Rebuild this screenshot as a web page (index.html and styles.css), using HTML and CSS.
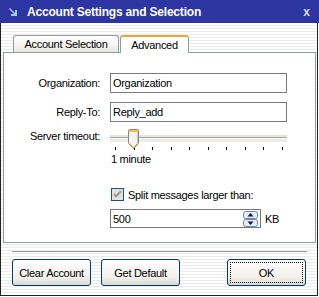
FILE: index.html
```html
<!DOCTYPE html>
<html lang="en">

<head>
    <meta charset="UTF-8">
    <title>Account Settings and Selection</title>
    <link rel="stylesheet" href="styles.css">
</head>

<body>
    <div class="window">
        <div class="titlebar">
            <svg class="app-icon" width="8" height="8" viewBox="0 0 8 8">
                <polygon points="0,1 1,0 6,5 6,2 8,2 8,8 2,8 2,6 5,6" fill="#a9c8f4" />
            </svg>
            <span class="title">Account Settings and Selection</span>
            <span class="close">x</span>
        </div>

        <div class="client">
            <div class="tabs">
                <div class="tab">Account Selection</div>
                <div class="tab active">Advanced</div>
            </div>

            <div class="panel">
                <div class="row">
                    <label>Organization:</label>
                    <div class="textbox">Organization</div>
                </div>
                <div class="row second">
                    <label>Reply-To:</label>
                    <div class="textbox">Reply_add</div>
                </div>

                <div class="row slider-row">
                    <label>Server timeout:</label>
                    <div class="slider">
                        <div class="track"></div>
                        <svg class="thumb" width="11" height="21" viewBox="0 0 11 21">
                            <path d="M1.5 0.5 h8 a1 1 0 0 1 1 1 v13 l-5 5 l-5 -5 v-13 a1 1 0 0 1 1 -1z" fill="#f4f3ee" stroke="#8c8b80" />
                            <rect x="1" y="1" width="9" height="2" fill="#f6c04f" />
                            <path d="M1.5 14.5 l4 4 l4 -4" fill="none" stroke="#f0b030" />
                            <path d="M9.5 3 v11" stroke="#c8c6b8" />
                        </svg>
                        <div class="ticks">
                            <i></i><i></i><i></i><i></i><i></i><i></i><i></i><i></i><i></i><i></i>
                        </div>
                        <div class="slider-value">1 minute</div>
                    </div>
                </div>

                <div class="row check-row">
                    <label></label>
                    <div class="checkbox">
                        <svg width="13" height="13" viewBox="0 0 13 13">
                            <rect x="0.5" y="0.5" width="12" height="12" fill="#e2e1da" stroke="#1c5180" />
                            <path d="M3 6 l2 2.2 l5 -5" fill="none" stroke="#9a9a94" stroke-width="2" />
                        </svg>
                        <span>Split messages larger than:</span>
                    </div>
                </div>

                <div class="row number-row">
                    <label></label>
                    <div class="numbox">
                        <span>500</span>
                        <svg class="spinner" width="15" height="16" viewBox="0 0 15 16">
                            <rect x="0.5" y="0.5" width="14" height="7" rx="2" fill="#e4ebfb" stroke="#6a86c8" />
                            <rect x="0.5" y="8.5" width="14" height="7" rx="2" fill="#e4ebfb" stroke="#6a86c8" />
                            <polygon points="7.5,2 10.5,5.5 4.5,5.5" fill="#1a1a1a" />
                            <polygon points="4.5,10.5 10.5,10.5 7.5,14" fill="#1a1a1a" />
                        </svg>
                    </div>
                    <span class="unit">KB</span>
                </div>
            </div>

            <div class="separator"></div>

            <div class="buttons">
                <button>Clear Account</button>
                <button>Get Default</button>
                <button class="ok">OK</button>
            </div>
        </div>
    </div>
</body>

</html>
```

FILE: styles.css
```css
body {
    margin: 0;
    font-family: "Liberation Sans", Arial, sans-serif;
    font-size: 11px;
    letter-spacing: -0.3px;
    color: #000;
    background: #fff;
}

.window {
    width: 319px;
    height: 297px;
}

/* title bar */
.titlebar {
    height: 23px;
    background: #2c35a2;
    color: #fff;
    display: flex;
    align-items: center;
    padding: 0 9px 0 9px;
    box-sizing: border-box;
}

.app-icon {
    margin-right: 10px;
    margin-top: 1px;
}

.title {
    flex: 1;
    font-weight: bold;
    font-size: 12px;
    letter-spacing: -0.2px;
}

.close {
    font-weight: bold;
    font-size: 12px;
    color: #d8dcf0;
    letter-spacing: 0;
}

/* striped client area */
.client {
    width: 318px;
    height: 273px;
    box-sizing: border-box;
    border: 1px solid #222;
    border-top: none;
    padding: 12px 1px 0 2px;
    background: repeating-linear-gradient(#fff 0, #fff 2px, #ebebeb 2px, #ebebeb 3px);
}

/* tabs */
.tabs {
    display: flex;
    align-items: flex-end;
    margin-left: 10px;
    height: 17px;
}

.tab {
    width: 106px;
    height: 17px;
    box-sizing: border-box;
    border: 1px solid #919b9c;
    border-bottom: none;
    border-radius: 3px 3px 0 0;
    background: linear-gradient(#fff, #f4f3ee 60%, #e7e6df);
    text-align: center;
    line-height: 16px;
}

.tab.active {
    position: relative;
    width: 69px;
    height: 18px;
    margin-left: 1px;
    margin-bottom: -1px;
    border-top: 2px solid #f0a535;
    background: #fff;
    line-height: 16px;
    z-index: 1;
}

/* tab page */
.panel {
    width: 313px;
    height: 191px;
    box-sizing: border-box;
    border: 1px solid #919b9c;
    background: #fff;
    padding-top: 20px;
}

.row {
    display: flex;
    align-items: center;
}

.row label {
    width: 96px;
    margin-right: 10px;
    text-align: right;
    flex-shrink: 0;
}

.row.second {
    margin-top: 9px;
}

.textbox {
    width: 177px;
    height: 20px;
    box-sizing: border-box;
    border: 1px solid #7a7a7a;
    padding-left: 2px;
    line-height: 18px;
}

/* slider */
.row.slider-row {
    align-items: flex-start;
    margin-top: 7px;
}

.slider-row label {
    margin-top: 1px;
    line-height: 13px;
}

.slider {
    position: relative;
    width: 177px;
}

.track {
    margin-top: 6px;
    height: 7px;
    background: linear-gradient(#e6e5dc 0, #e6e5dc 2px, #a9a99e 2px, #a9a99e 3px, #fff 3px, #fff 4px, #ecebe4 4px);
}

.thumb {
    position: absolute;
    left: 18px;
    top: 0;
}

.ticks {
    display: flex;
    justify-content: space-between;
    padding: 0 4px 0 5px;
    margin-top: 5px;
    height: 3px;
}

.ticks i {
    width: 1px;
    height: 3px;
    background: #000;
}

.slider-value {
    margin-top: 3px;
    padding-left: 1px;
    line-height: 13px;
}

/* checkbox */
.row.check-row {
    margin-top: 22px;
}

.checkbox {
    display: flex;
    align-items: center;
    margin-left: 1px;
}

.checkbox svg {
    margin-right: 4px;
}

/* number box */
.row.number-row {
    margin-top: 8px;
}

.numbox {
    width: 151px;
    height: 19px;
    box-sizing: border-box;
    border: 1px solid #7a7a7a;
    padding: 0 2px 0 2px;
    display: flex;
    align-items: center;
    justify-content: space-between;
}

.unit {
    margin-left: 4px;
}

.separator {
    height: 1px;
    background: #9a9a9a;
    margin: 8px 9px 0 9px;
}

/* buttons */
.buttons {
    display: flex;
    padding: 7px 10px 0 9px;
    gap: 10px;
}

button {
    width: 79px;
    height: 27px;
    border: 1px solid #003c74;
    border-radius: 3px;
    background: linear-gradient(#fff, #f1f0eb 70%, #dcd8cc);
    font-family: "Liberation Sans", Arial, sans-serif;
    font-size: 11px;
    letter-spacing: -0.3px;
    color: #000;
    padding: 0;
}

button.ok {
    margin-left: auto;
    outline: 1px dotted #000;
    outline-offset: -4px;
}
```
